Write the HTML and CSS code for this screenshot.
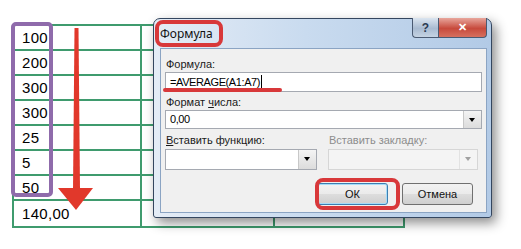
FILE: index.html
```html
<!DOCTYPE html>
<html lang="ru">
<head>
  <meta charset="UTF-8">
  <title>Формула</title>
  <link rel="stylesheet" href="styles.css">
</head>
<body>
  <div class="page">
    <div class="sheet">
      <div class="cell num">100</div><div class="cell"></div><div class="cell"></div>
      <div class="cell num">200</div><div class="cell"></div><div class="cell"></div>
      <div class="cell num">300</div><div class="cell"></div><div class="cell"></div>
      <div class="cell num">300</div><div class="cell"></div><div class="cell"></div>
      <div class="cell num">25</div><div class="cell"></div><div class="cell"></div>
      <div class="cell num">5</div><div class="cell"></div><div class="cell"></div>
      <div class="cell num">50</div><div class="cell"></div><div class="cell"></div>
      <div class="cell num result">140,00</div><div class="cell last"></div><div class="cell last"></div>
    </div>

    <!-- annotations over the sheet -->
    <div class="range-mark"></div>
    <svg class="arrow" width="521" height="249" viewBox="0 0 521 249">
      <polygon points="74.5,28 78.5,28 80,190 73,190" fill="#e1382b"/>
      <polygon points="58,188 93,188 76,210" fill="#e1382b"/>
    </svg>

    <div class="dialog">
      <div class="titlebar">
        <span class="title">Формула</span>
        <div class="caption">
          <div class="cap-btn help">?</div>
          <div class="cap-btn close">&#x2715;</div>
        </div>
      </div>
      <div class="client">
        <label class="label">Формула:</label>
        <div class="field">=AVERAGE(A1:A7)<span class="caret"></span></div>

        <label class="label">Формат <u>ч</u>исла:</label>
        <div class="field select">0,00<span class="drop"></span></div>

        <div class="combo-row">
          <div class="combo-col">
            <label class="label"><u>В</u>ставить функцию:</label>
            <div class="field combo"><span class="drop"></span></div>
          </div>
          <div class="combo-col">
            <label class="label disabled">Вставить закладку:</label>
            <div class="field combo off"><span class="drop"></span></div>
          </div>
        </div>

        <div class="buttons">
          <button class="btn default">ОК</button>
          <button class="btn">Отмена</button>
        </div>
      </div>
    </div>

    <div class="mark mark-title"></div>
    <div class="mark-line"></div>
    <div class="mark mark-ok"></div>
  </div>
</body>
</html>
```

FILE: styles.css
```css
body {
  margin: 0;
  background: #fff;
  font-family: 'Liberation Sans', Arial, sans-serif;
  color: #000;
}

.page {
  position: relative;
  width: 521px;
  height: 249px;
  overflow: hidden;
}

/* spreadsheet */
.sheet {
  display: grid;
  grid-template-columns: 128px 133px 130px;
  grid-template-rows: repeat(7, 25px) 27px;
  margin: 24px 0 0 12px;
  width: max-content;
  border-top: 2px solid #3f9b6e;
  border-left: 2px solid #3f9b6e;
}

.cell {
  box-sizing: border-box;
  border-right: 2px solid #3f9b6e;
  border-bottom: 2px solid #3f9b6e;
}

.cell.num {
  display: flex;
  align-items: center;
  padding-left: 8px;
  font-size: 15px;
  letter-spacing: 0.3px;
}

.range-mark {
  position: absolute;
  left: 11px;
  top: 22px;
  width: 42px;
  height: 175px;
  box-sizing: border-box;
  border: 4px solid #8f6bab;
  border-radius: 5px;
}

.arrow {
  position: absolute;
  left: 0;
  top: 0;
  pointer-events: none;
}

/* dialog window */
.dialog {
  position: absolute;
  left: 153px;
  top: 18px;
  width: 339px;
  height: 200px;
  box-sizing: border-box;
  display: flex;
  flex-direction: column;
  border: 1px solid #34465f;
  border-radius: 7px 7px 3px 3px;
  background: linear-gradient(to right, #e4ecf6 0%, #c9dbef 45%, #b2cae6 100%);
  box-shadow: 4px 5px 12px rgba(0, 0, 0, 0.45);
}

.titlebar {
  display: flex;
  justify-content: space-between;
  align-items: flex-start;
  height: 29px;
  padding: 0 4px 0 6px;
}

.title {
  font-family: 'Noto Sans', sans-serif;
  font-size: 12px;
  line-height: 29px;
  color: #111;
}

.caption {
  display: flex;
  margin-top: -1px;
}

.cap-btn {
  height: 20px;
  box-sizing: border-box;
  border: 1px solid #4a5a72;
  border-top: none;
  display: flex;
  align-items: center;
  justify-content: center;
  font-weight: bold;
  font-size: 12px;
}

.help {
  width: 26px;
  border-right: none;
  border-radius: 0 0 0 4px;
  background: linear-gradient(#dbe5f0, #a9bbd1 55%, #c5d3e3);
  color: #2b3a52;
}

.close {
  width: 49px;
  border-radius: 0 0 4px 0;
  background: linear-gradient(#e8a69c, #c74a3c 55%, #d66f5e);
  color: #fff;
  font-size: 11px;
}

.client {
  flex: 1;
  display: flex;
  flex-direction: column;
  margin: 0 4px 4px 6px;
  padding: 8px 4px 0 4px;
  background: #f0f0f0;
  border: 1px solid #8ba4c3;
}

.label {
  display: block;
  font-size: 11px;
  line-height: 14px;
  padding-left: 1px;
  color: #1a1a1a;
}

.label.disabled {
  color: #8d8d8d;
}

.field {
  position: relative;
  box-sizing: border-box;
  height: 20px;
  margin: 1px 0 3px;
  padding-left: 4px;
  background: #fff;
  border: 1px solid #a5a9b1;
  font-size: 11px;
  line-height: 18px;
  letter-spacing: -0.4px;
}

.caret {
  display: inline-block;
  width: 1px;
  height: 13px;
  margin-left: 1px;
  vertical-align: -2px;
  background: #000;
}

.select {
  height: 19px;
  line-height: 17px;
}

.drop {
  position: absolute;
  right: 0;
  top: 0;
  bottom: 0;
  width: 17px;
  background: linear-gradient(#f4f4f4, #dcdcdc);
  border-left: 1px solid #c8c8c8;
}

.drop::after {
  content: "";
  position: absolute;
  left: 5px;
  top: 7px;
  border-left: 3.5px solid transparent;
  border-right: 3.5px solid transparent;
  border-top: 4px solid #000;
}

.combo-row {
  display: flex;
  gap: 11px;
  margin-top: 1px;
}

.combo-col {
  width: 152px;
}

.combo-col + .combo-col {
  width: 150px;
}

.combo {
  height: 21px;
  margin-top: 2px;
}

.combo.off {
  background: #f4f4f4;
  border-color: #d6d6d6;
}

.combo.off .drop {
  background: #f4f4f4;
  border-left-color: #e2e2e2;
}

.combo.off .drop::after {
  border-top-color: #a0a0a0;
}

.buttons {
  display: flex;
  justify-content: flex-end;
  align-items: center;
  gap: 14px;
  margin-top: 10px;
  padding-right: 9px;
}

.btn {
  width: 71px;
  height: 22px;
  padding: 0;
  font-family: 'Liberation Sans', Arial, sans-serif;
  font-size: 11px;
  color: #111;
  border: 1px solid #707070;
  border-radius: 3px;
  background: linear-gradient(#f2f2f2 0%, #ebebeb 48%, #dddddd 52%, #cfcfcf 100%);
}

.btn.default {
  border-color: #3c7fb1;
  box-shadow: inset 0 0 0 1px #a6dcf8;
}

/* red annotations */
.mark {
  position: absolute;
  box-sizing: border-box;
  border: 4px solid #d8383a;
  border-radius: 8px;
}

.mark-title {
  left: 155px;
  top: 20px;
  width: 68px;
  height: 27px;
}

.mark-ok {
  left: 315px;
  top: 178px;
  width: 85px;
  height: 32px;
}

.mark-line {
  position: absolute;
  left: 163px;
  top: 88px;
  width: 119px;
  height: 4px;
  border-radius: 2px;
  background: #d8383a;
}
```
